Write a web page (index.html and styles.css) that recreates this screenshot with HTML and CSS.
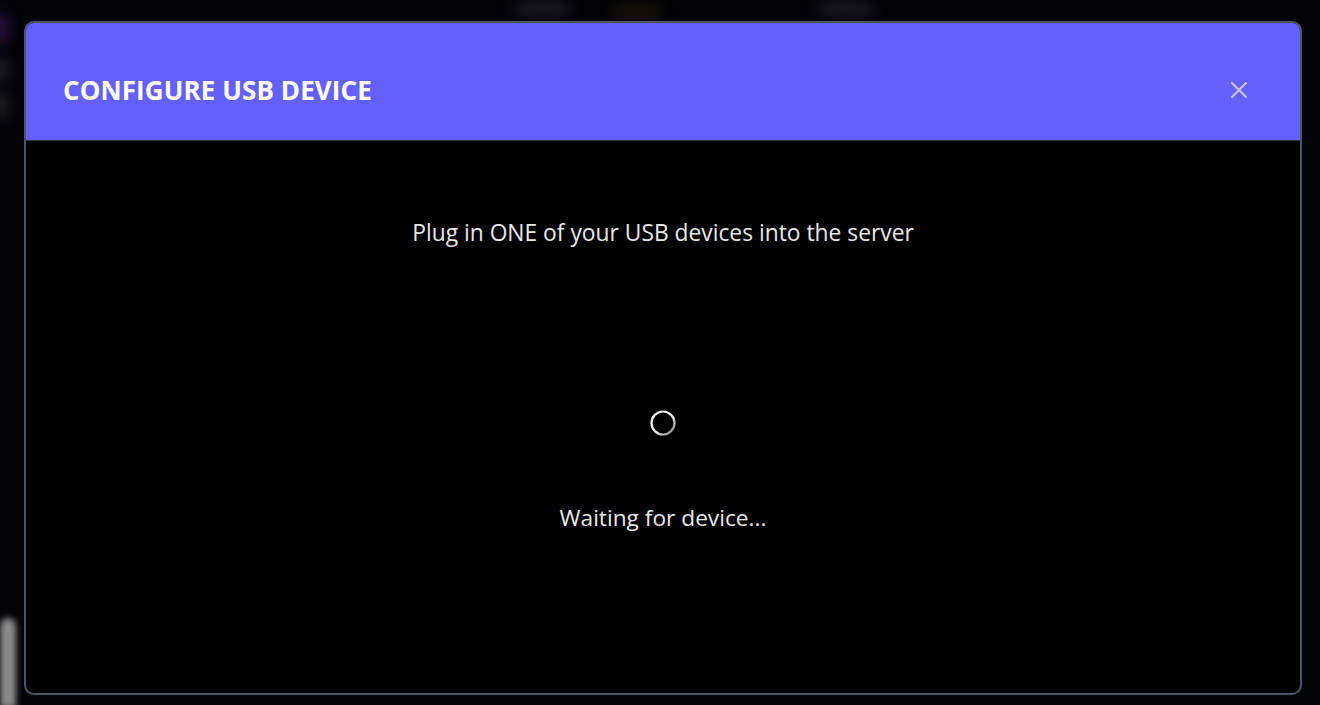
FILE: index.html
```html
<!DOCTYPE html>
<html>
<head>
<meta charset="utf-8">
<link rel="stylesheet" href="styles.css">
</head>
<body>
<div class="backdrop">
  <div class="blob b1"></div>
  <div class="blob b2"></div>
  <div class="blob b3"></div>
  <div class="blob b4"></div>
  <div class="blob b5"></div>
  <div class="blob b6"></div>
  <div class="blob b7"></div>
</div>
<div class="overlay">
  <div class="modal">
    <div class="modal-header">
      <h1 class="modal-title">CONFIGURE USB DEVICE</h1>
      <button class="close-btn" aria-label="Close">
        <svg width="18" height="18" viewBox="0 0 18 18"><path d="M2 2L16 16M16 2L2 16" stroke="currentColor" stroke-width="2.2" stroke-linecap="round"/></svg>
      </button>
    </div>
    <div class="modal-body">
      <p class="instruction">Plug in ONE of your USB devices into the server</p>
      <div class="waiting">
        <svg class="spinner" width="30" height="30" viewBox="0 0 30 30">
          <defs>
            <linearGradient id="sg" x1="0" y1="0" x2="1" y2="1">
              <stop offset="0" stop-color="#ffffff"/>
              <stop offset="0.6" stop-color="#e6e6e6"/>
              <stop offset="1" stop-color="#6b6f7a"/>
            </linearGradient>
          </defs>
          <circle cx="15" cy="15" r="11.5" fill="none" stroke="url(#sg)" stroke-width="2.2"/>
        </svg>
        <p class="status">Waiting for device...</p>
      </div>
    </div>
  </div>
</div>
</body>
</html>
```

FILE: styles.css
```css
html, body {
  margin: 0;
  padding: 0;
  width: 1320px;
  height: 705px;
  overflow: hidden;
  background: #030308;
  font-family: "Open Sans", "Noto Sans", sans-serif;
}

.backdrop {
  position: absolute;
  inset: 0;
  overflow: hidden;
}

.blob {
  position: absolute;
  filter: blur(7px);
  border-radius: 6px;
  opacity: 0.8;
}
.b1 { left: -6px; top: 14px; width: 14px; height: 30px; background: #3a1450; }
.b2 { left: -6px; top: 58px; width: 14px; height: 22px; background: #2a2a30; }
.b3 { left: -6px; top: 92px; width: 14px; height: 26px; background: #2a2a2e; }
.b4 { left: 0px; top: 618px; width: 16px; height: 90px; background: #8a8a8a; filter: blur(3px); border-radius: 8px 8px 0 0; opacity: 1; }
.b5 { left: 515px; top: 2px; width: 55px; height: 14px; background: #202026; }
.b6 { left: 612px; top: 8px; width: 50px; height: 10px; background: #2e1d00; }
.b7 { left: 818px; top: 2px; width: 55px; height: 14px; background: #202026; }

.overlay {
  position: relative;
  display: flex;
  padding: 21px 0 0 24px;
}

.modal {
  width: 1278px;
  height: 674px;
  box-sizing: border-box;
  border: 2px solid #4d5566;
  border-radius: 10px;
  background: #000;
  overflow: hidden;
  display: flex;
  flex-direction: column;
}

.modal-header {
  box-sizing: border-box;
  height: 118px;
  flex: none;
  background: #6360ff;
  display: flex;
  align-items: center;
  justify-content: space-between;
  padding: 17px 52px 0 37px;
  border-bottom: 1px solid #2d3140;
}

.modal-title {
  margin: 0;
  color: #ffffff;
  font-size: 26px;
  font-weight: 700;
  letter-spacing: 0.1px;
}

.close-btn {
  background: none;
  border: none;
  padding: 0;
  color: #c3c3d6;
  display: flex;
  cursor: pointer;
}

.modal-body {
  flex: 1;
  display: flex;
  flex-direction: column;
  align-items: center;
  color: #e8e8e8;
}

.instruction {
  margin: 78px 0 0;
  font-size: 22.8px;
  line-height: 28px;
}

.waiting {
  margin-top: 161px;
  display: flex;
  flex-direction: column;
  align-items: center;
}

.spinner {
  display: block;
}

.status {
  margin: 66px 0 0;
  font-size: 22.7px;
  line-height: 28px;
}
```
